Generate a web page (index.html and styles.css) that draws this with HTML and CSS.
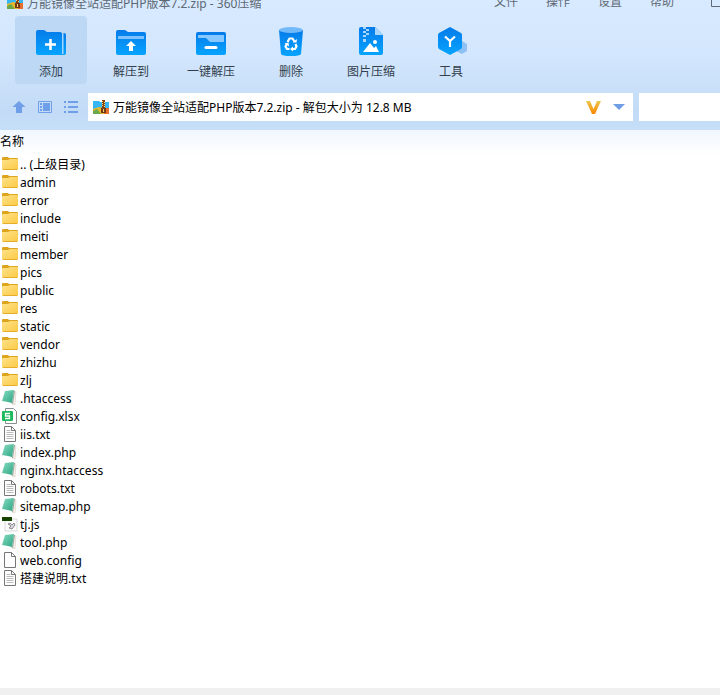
FILE: index.html
```html
<!DOCTYPE html>
<html lang="zh-CN">
  <head>
    <meta charset="UTF-8" />
    <meta name="viewport" content="width=device-width, initial-scale=1" />
    <title>万能镜像全站适配PHP版本7.2.zip - 360压缩</title>
    <link rel="stylesheet" href="styles.css">
  </head>
  <body>
    <!-- Shared icons -->
    <svg class="sprite" aria-hidden="true">
      <defs>
        <linearGradient id="blue" x1="0" y1="0" x2="0" y2="1">
          <stop offset="0" stop-color="#057be9" />
          <stop offset="1" stop-color="#06a4ff" />
        </linearGradient>
        <linearGradient id="yellow" x1="0" y1="0" x2="1" y2="1">
          <stop offset="0" stop-color="#ffe28a" />
          <stop offset="1" stop-color="#fbc944" />
        </linearGradient>
        <linearGradient id="green" x1="0" y1="0" x2="1" y2="1">
          <stop offset="0" stop-color="#8adcc2" />
          <stop offset="1" stop-color="#2ba583" />
        </linearGradient>
        <linearGradient id="orange" x1="0" y1="0" x2="0" y2="1">
          <stop offset="0" stop-color="#e9c94d" />
          <stop offset="1" stop-color="#fb8500" />
        </linearGradient>
      </defs>
      <symbol id="i-zip" viewBox="0 0 16 14">
        <path d="M0 1h6l1 1h9v8H0z" fill="#35b6f2" />
        <path d="M0 9l6-2 10 2v5H0z" fill="#e5b92e" />
        <path d="M0 11l4-2 4 5H0z" fill="#6ba84c" />
        <path d="M11 8h5v6h-5z" fill="#e86f2b" />
        <path d="M9 0h3v9H9z" fill="#854315" />
        <path d="M9 1h1v1H9zm2 1h1v1h-1zM9 3h1v1H9zm2 1h1v1h-1zM9 5h1v1H9zm2 1h1v1h-1z" fill="#ffd46b" />
        <path d="M8 8h5v5H8z" fill="#713a17" />
        <path d="M10 9h1v3h-1z" fill="#ffd46b" />
      </symbol>
      <symbol id="i-folder" viewBox="0 0 16 16">
        <path d="M0 2q0-1 1-1h5l1 1h8q1 0 1 1v3H0z" fill="#dda51d" />
        <path d="M0 5q0-1 1-1h5l2-1h7q1 0 1 1v9q0 1-1 1H1q-1 0-1-1z" fill="url(#yellow)" />
        <path d="M1 13.500h14" stroke="#e5ad28" />
      </symbol>
      <symbol id="i-book" viewBox="0 0 16 16">
        <path d="M12 1l2 1-1 13-3-1z" fill="#f7eee5" stroke="#d9cfc8" stroke-width=".6" />
        <path d="M3 1l9-1-2 13-4-1-6-1z" fill="url(#green)" />
        <path d="M12.500 1L10.500 14" stroke="#7d9a91" stroke-width=".8" />
      </symbol>
      <symbol id="i-page" viewBox="0 0 16 16">
        <path d="M2.500.5h7l4 4v11h-11z" fill="#fff" stroke="#777" />
        <path d="M9.500.5v4h4" fill="none" stroke="#777" />
      </symbol>
      <symbol id="i-text" viewBox="0 0 16 16">
        <use href="#i-page" />
        <path d="M4.500 4.500h4M4.500 6.500h7M4.500 8.500h7M4.500 10.500h7M4.500 12.500h7" stroke="#bbb" />
      </symbol>
      <symbol id="i-sheet" viewBox="0 0 16 16">
        <path d="M3.500.5h8l3 3v12h-11z" fill="#fff" stroke="#8a8f8d" />
        <rect y="3" width="11" height="10" rx="1" fill="#1dbb5c" />
        <path d="M8 5.500H3.500V8h4v2.500H3" fill="none" stroke="#fff" stroke-width="1.300" />
      </symbol>
      <symbol id="i-script" viewBox="0 0 16 16">
        <path d="M3 3h12v12H3z" fill="#fafafa" stroke="#ccc" stroke-width=".7" />
        <path d="M0 1h10v4H0z" fill="#164400" />
        <path d="M6 8l2-1 2 2 2-2 1 2-3 4-3-1 2-2z" fill="#d8d4e0" stroke="#777" stroke-width=".8" />
      </symbol>
    </svg>

    <header class="chrome">
      <div class="titlebar">
        <svg class="zip-icon"><use href="#i-zip" /></svg>
        <h1 class="title">万能镜像全站适配PHP版本7.2.zip - 360压缩</h1>
        <nav class="menu">
          <button type="button">文件</button>
          <button type="button">操作</button>
          <button type="button">设置</button>
          <button type="button">帮助</button>
          <button type="button" class="skin" aria-label="皮肤">
            <svg width="18" height="18" viewBox="0 0 18 18"><path d="M9 1L5.500 5 7 9l2.500-1v8.500H18" fill="none" stroke="#5d6b7b" /></svg>
          </button>
        </nav>
      </div>

      <div class="toolbar">
        <button type="button" class="tool active">
          <svg viewBox="0 0 32 32">
            <path d="M24 6h5q2 0 2 2v18q0 2-2 2h-5z" fill="url(#blue)" />
            <path d="M27 6h1.500v21H27z" fill="#a4d5ff" />
            <path d="M1 5q0-2 2-2h6l3 2h13q2 0 2 2v21H3q-2 0-2-2z" fill="url(#blue)" />
            <path d="M15.500 12v11M10 17.500h11" stroke="#fff" stroke-width="2.600" />
          </svg>
          <span>添加</span>
        </button>
        <button type="button" class="tool">
          <svg viewBox="0 0 32 32">
            <path d="M1 5q0-2 2-2h7l3 2h16q2 0 2 2v19q0 2-2 2H3q-2 0-2-2z" fill="url(#blue)" />
            <path d="M3 9h26v3H3z" fill="#7ec3ff" />
            <path d="M16 14l5 5h-3v5h-4v-5h-3z" fill="#fff" />
          </svg>
          <span>解压到</span>
        </button>
        <button type="button" class="tool">
          <svg viewBox="0 0 32 32">
            <rect x="1" y="5" width="30" height="23" rx="2" fill="url(#blue)" />
            <path d="M3 8h26v7H15l-4-4H3z" fill="#86c8ff" />
            <path d="M11 20.500h10" stroke="#fff" stroke-width="3" stroke-linecap="round" />
          </svg>
          <span>一键解压</span>
        </button>
        <button type="button" class="tool">
          <svg viewBox="0 0 32 32">
            <path d="M4 3l2 24q1 2 10 2t10-2l2-24z" fill="url(#blue)" />
            <ellipse cx="16" cy="3" rx="12" ry="3" fill="#72b9fa" />
            <g fill="none" stroke="#fff" stroke-width="2.200">
              <path d="M12.500 15l2-3.500h3l2 3M20.500 17l1 2.500-1.500 2.500h-3M14.500 22H12l-1.500-2.500 1.500-3" />
            </g>
            <path d="M17.500 15.500h4l.5-3.500zM18 19.500v5l-3-2.500zM9.500 16.500l4-1 .5 4z" fill="#fff" />
          </svg>
          <span>删除</span>
        </button>
        <button type="button" class="tool">
          <svg viewBox="0 0 32 32">
            <path d="M4 2q0-2 2-2h14l8 8v18q0 2-2 2H6q-2 0-2-2z" fill="url(#blue)" />
            <path d="M20 0l8 8h-8z" fill="#a9d6ff" />
            <path d="M8 0h3v2H8zm3 2h3v2h-3zM8 4h3v2H8zm3 2h3v2h-3zM8 8h3v2H8zm0 4h3v3H8z" fill="#a9d6ff" />
            <circle cx="20" cy="15" r="2" fill="#fff" />
            <path d="M8 25l7-9 4 5 2-2 3 6z" fill="#fff" />
          </svg>
          <span>图片压缩</span>
        </button>
        <button type="button" class="tool">
          <svg viewBox="0 0 32 32">
            <path d="M27 14l5 3v7l-5 3-6-3v-7z" fill="#8dc1f5" />
            <path d="M15 0l11 6q1 1 1 2v12q0 1-1 2l-11 6-11-6q-1-1-1-2V8q0-1 1-2z" fill="url(#blue)" />
            <path d="M10 9.500l5 4.500 5-4.500M15 14v6" fill="none" stroke="#fff" stroke-width="2.200" />
          </svg>
          <span>工具</span>
        </button>
      </div>

      <div class="locationbar">
        <div class="nav">
          <button type="button" aria-label="向上">
            <svg width="14" height="14" viewBox="0 0 14 14"><path d="M7 1l6.500 6H10v6H4V7H.5z" fill="#6f9fe9" /></svg>
          </button>
          <button type="button" aria-label="预览">
            <svg width="14" height="14" viewBox="0 0 14 14"><path d="M.5 1.500h13v11H.5z" fill="none" stroke="#6f9fe9" /><path d="M2 3h2v2H2zm0 3h2v2H2zm0 3h2v2H2zm3-6h7v8H5z" fill="#6f9fe9" /></svg>
          </button>
          <button type="button" aria-label="列表">
            <svg width="14" height="14" viewBox="0 0 14 14"><path d="M0 2h2M4 2h10M0 7h2M4 7h10M0 12h2M4 12h10" stroke="#6f9fe9" stroke-width="2" /></svg>
          </button>
        </div>
        <div class="address">
          <svg class="zip-icon"><use href="#i-zip" /></svg>
          <input type="text" aria-label="地址" value="万能镜像全站适配PHP版本7.2.zip - 解包大小为 12.8 MB">
          <button type="button" aria-label="认证">
            <svg width="16" height="16" viewBox="0 0 16 16"><path d="M1 2h4l3.500 8L12 2h4l-6 13H7z" fill="url(#orange)" /></svg>
          </button>
          <button type="button" aria-label="展开地址">
            <svg width="12" height="6" viewBox="0 0 12 6"><path d="M0 0h12L6 6z" fill="#6f9ee6" /></svg>
          </button>
        </div>
        <input class="search" type="text" aria-label="搜索">
      </div>
    </header>

    <main class="content">
      <table class="files">
        <thead>
          <tr><th scope="col">名称</th></tr>
        </thead>
        <tbody>
          <tr><td><div class="file"><svg><use href="#i-folder" /></svg>.. (上级目录)</div></td></tr>
          <tr><td><div class="file"><svg><use href="#i-folder" /></svg>admin</div></td></tr>
          <tr><td><div class="file"><svg><use href="#i-folder" /></svg>error</div></td></tr>
          <tr><td><div class="file"><svg><use href="#i-folder" /></svg>include</div></td></tr>
          <tr><td><div class="file"><svg><use href="#i-folder" /></svg>meiti</div></td></tr>
          <tr><td><div class="file"><svg><use href="#i-folder" /></svg>member</div></td></tr>
          <tr><td><div class="file"><svg><use href="#i-folder" /></svg>pics</div></td></tr>
          <tr><td><div class="file"><svg><use href="#i-folder" /></svg>public</div></td></tr>
          <tr><td><div class="file"><svg><use href="#i-folder" /></svg>res</div></td></tr>
          <tr><td><div class="file"><svg><use href="#i-folder" /></svg>static</div></td></tr>
          <tr><td><div class="file"><svg><use href="#i-folder" /></svg>vendor</div></td></tr>
          <tr><td><div class="file"><svg><use href="#i-folder" /></svg>zhizhu</div></td></tr>
          <tr><td><div class="file"><svg><use href="#i-folder" /></svg>zlj</div></td></tr>
          <tr><td><div class="file"><svg><use href="#i-book" /></svg>.htaccess</div></td></tr>
          <tr><td><div class="file"><svg><use href="#i-sheet" /></svg>config.xlsx</div></td></tr>
          <tr><td><div class="file"><svg><use href="#i-text" /></svg>iis.txt</div></td></tr>
          <tr><td><div class="file"><svg><use href="#i-book" /></svg>index.php</div></td></tr>
          <tr><td><div class="file"><svg><use href="#i-book" /></svg>nginx.htaccess</div></td></tr>
          <tr><td><div class="file"><svg><use href="#i-text" /></svg>robots.txt</div></td></tr>
          <tr><td><div class="file"><svg><use href="#i-book" /></svg>sitemap.php</div></td></tr>
          <tr><td><div class="file"><svg><use href="#i-script" /></svg>tj.js</div></td></tr>
          <tr><td><div class="file"><svg><use href="#i-book" /></svg>tool.php</div></td></tr>
          <tr><td><div class="file"><svg><use href="#i-page" /></svg>web.config</div></td></tr>
          <tr><td><div class="file"><svg><use href="#i-text" /></svg>搭建说明.txt</div></td></tr>
        </tbody>
      </table>
    </main>

    <footer class="statusbar"></footer>
  </body>
</html>
```
FILE: styles.css
```css
* {
  margin: 0;
  padding: 0;
  box-sizing: border-box;
}

body {
  display: flex;
  flex-direction: column;
  min-height: 100vh;
  background: #fff;
  color: #000;
  font-family: "Noto Sans", "Noto Sans CJK SC", sans-serif;
  font-size: 12px;
  line-height: 18px;
  overflow-x: hidden;
}

button,
input {
  font: inherit;
  color: inherit;
  background: none;
  border: none;
  outline: none;
}

button {
  cursor: pointer;
}

svg {
  display: block;
  flex-shrink: 0;
}

.sprite {
  position: absolute;
  width: 0;
  height: 0;
}

.zip-icon {
  width: 16px;
  height: 14px;
}

/* Window chrome */
.chrome {
  background: linear-gradient(180deg, #d8eaff 0%, #d2e6fd 45%, #c3dbf6 85%, #c6dff9 100%);
}

.titlebar {
  display: flex;
  align-items: flex-end;
  gap: 4px;
  height: 12px;
  padding-left: 7px;
  overflow: hidden;
  color: #5d6874;
}

.titlebar .zip-icon {
  margin-bottom: 3px;
}

.title {
  font-size: 12px;
  font-weight: 400;
  line-height: 16px;
  white-space: nowrap;
}

.menu {
  display: flex;
  align-items: flex-end;
  gap: 28px;
  margin-left: auto;
  padding-bottom: 1px;
}

.menu button {
  height: 18px;
  white-space: nowrap;
}

.menu .skin {
  width: 18px;
  margin-bottom: 3px;
}

.toolbar {
  display: flex;
  gap: 8px;
  padding: 4px 15px 9px;
}

.tool {
  display: flex;
  flex-direction: column;
  align-items: center;
  gap: 4px;
  width: 72px;
  height: 68px;
  padding-top: 11px;
  border-radius: 4px;
  color: #333f4c;
  white-space: nowrap;
}

.tool svg {
  width: 32px;
  height: 32px;
}

.tool:hover,
.tool.active {
  background: #bcd8f5;
}

.locationbar {
  display: flex;
  align-items: center;
  gap: 6px;
  padding-bottom: 9px;
}

.nav {
  display: flex;
  gap: 12px;
  padding: 0 4px 0 12px;
}

.address {
  display: flex;
  flex: 1;
  align-items: center;
  gap: 4px;
  height: 28px;
  padding: 0 8px 0 5px;
  background: #fff;
}

.address input {
  flex: 1;
  min-width: 0;
  padding-top: 1px;
}

.address button {
  margin-left: 8px;
}

.search {
  width: 81px;
  height: 28px;
  background: #fff;
}

/* File list */
.content {
  flex: 1;
}

.files {
  width: 100%;
  border-collapse: collapse;
}

.files th {
  height: 26px;
  padding-bottom: 2px;
  background: linear-gradient(180deg, #f0f7fe, #fff);
  font-weight: 400;
  text-align: left;
}

.file {
  display: flex;
  align-items: flex-start;
  gap: 2px;
  height: 18px;
  padding-left: 2px;
  white-space: nowrap;
}

.file svg {
  width: 16px;
  height: 16px;
}

.statusbar {
  height: 7px;
  background: #f0f0f0;
}
```
